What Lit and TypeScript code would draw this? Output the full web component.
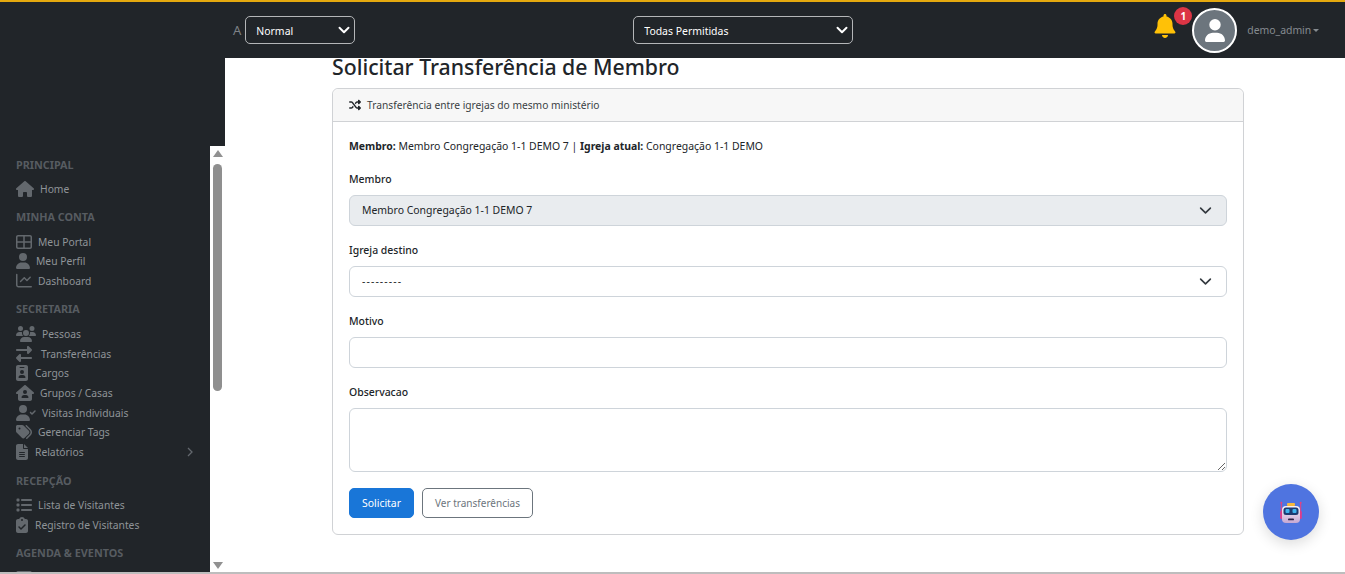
import { LitElement, html, css, svg } from "lit";
import { customElement } from "lit/decorators.js";

const ICONS: Record<string, [number, number, any]> = {
  home: [576, 512, svg`<path d="M575.8 255.5c0 18-15 32.1-32 32.1h-32l.7 160.2c0 2.7-.2 5.4-.5 8.1V472c0 22.1-17.9 40-40 40H456c-1.100 0-2.200 0-3.300-.1-1.400.1-2.800.1-4.200.1H392c-22.100 0-40-17.900-40-40V384c0-17.700-14.300-32-32-32h-64c-17.700 0-32 14.300-32 32v88c0 22.100-17.900 40-40 40h-55.900c-1.500 0-3-.1-4.500-.2-1.200.1-2.400.2-3.600.2H104c-22.100 0-40-17.900-40-40V360c0-.9 0-1.900.1-2.800v-69.600H32c-18 0-32-14-32-32.100 0-9 3-17 10-24L266.400 8c7-7 15-8 22-8s15 2 21 7l255.400 224.500c8 7 12 15 11 24z"/>`],
  grid: [512, 512, svg`<path d="M448 32H64C28.700 32 0 60.700 0 96v320c0 35.300 28.700 64 64 64h384c35.300 0 64-28.700 64-64V96c0-35.300-28.700-64-64-64zM64 80h168v152H48V96c0-8.800 7.200-16 16-16zM48 280h184v152H64c-8.800 0-16-7.200-16-16V280zm232 152V280h184v136c0 8.800-7.200 16-16 16H280zm184-200H280V80h168c8.800 0 16 7.200 16 16v136z"/>`],
  user: [448, 512, svg`<path d="M224 256a128 128 0 1 0 0-256 128 128 0 1 0 0 256zm-45.700 48C79.800 304 0 383.800 0 482.300 0 498.700 13.300 512 29.700 512h388.600c16.400 0 29.700-13.300 29.700-29.700C448 383.800 368.200 304 269.700 304h-91.400z"/>`],
  chart: [512, 512, svg`<path d="M48 48c0-13.300-10.700-24-24-24S0 34.700 0 48v336c0 44.200 35.800 80 80 80h408c13.300 0 24-10.700 24-24s-10.700-24-24-24H80c-17.700 0-32-14.300-32-32V48zm423 103c9.400-9.400 9.400-24.600 0-33.900s-24.600-9.400-33.900 0l-87 87-68-68c-9.400-9.400-24.600-9.400-33.900 0l-120 120c-9.400 9.400-9.400 24.600 0 33.900s24.600 9.400 33.900 0l103-103 68 68c9.400 9.400 24.600 9.400 33.900 0l104-104z"/>`],
  users: [640, 512, svg`<path d="M144 0a80 80 0 1 1 0 160 80 80 0 1 1 0-160zm368 0a80 80 0 1 1 0 160 80 80 0 1 1 0-160zM0 298.700C0 239.800 47.800 192 106.700 192h42.700c15.900 0 31 3.500 44.600 9.700-1.300 7.200-1.900 14.700-1.900 22.300 0 38.200 16.800 72.500 43.300 96H21.300C9.600 320 0 310.400 0 298.700zM405.300 320h-.7c26.600-23.500 43.300-57.800 43.300-96 0-7.600-.7-15-1.900-22.300 13.600-6.300 28.700-9.700 44.600-9.700h42.700c58.900 0 106.700 47.800 106.700 106.700 0 11.800-9.600 21.300-21.300 21.300H405.300zM224 224a96 96 0 1 1 192 0 96 96 0 1 1-192 0zM128 485.300C128 411.700 187.700 352 261.300 352h117.300c73.700 0 133.400 59.700 133.400 133.300 0 14.700-11.900 26.700-26.700 26.700H154.700c-14.700 0-26.700-11.900-26.700-26.700z"/>`],
  swap: [512, 512, svg`<path d="M32 96h320V32c0-12.900 7.800-24.600 19.800-29.600s25.700-2.200 34.900 6.900l96 96c6 6 9.400 14.100 9.400 22.600s-3.400 16.600-9.400 22.600l-96 96c-9.200 9.200-22.900 11.900-34.900 6.900S352 236.900 352 224v-64H32c-17.700 0-32-14.300-32-32s14.300-32 32-32zm448 256c17.700 0 32 14.300 32 32s-14.300 32-32 32H160v64c0 12.900-7.800 24.600-19.800 29.600s-25.700 2.200-34.900-6.900l-96-96c-6-6-9.400-14.100-9.400-22.600s3.400-16.600 9.400-22.600l96-96c9.200-9.200 22.900-11.900 34.900-6.900s19.800 16.600 19.800 29.600v64h320z"/>`],
  badge: [384, 512, svg`<path fill-rule="evenodd" d="M64 0C28.700 0 0 28.700 0 64v384c0 35.300 28.700 64 64 64h256c35.300 0 64-28.700 64-64V64c0-35.300-28.700-64-64-64H64zm64 64h128c8.800 0 16 7.200 16 16s-7.200 16-16 16H128c-8.800 0-16-7.200-16-16s7.200-16 16-16zm64 96a64 64 0 1 1 0 128 64 64 0 1 1 0-128zm-32 160h64c44.200 0 80 35.800 80 80 0 8.800-7.200 16-16 16H96c-8.800 0-16-7.200-16-16 0-44.200 35.800-80 80-80z"/>`],
  houseUser: [576, 512, svg`<path fill-rule="evenodd" d="M575.800 255.500c0 18-15 32.100-32 32.100h-32l.7 160.200c0 35.500-28.500 64.200-64 64.200H128.100c-35.300 0-64-28.700-64-64V287.600H32c-18 0-32-14-32-32.100 0-9 3-17 10-24L266.400 8c7-7 15-8 22-8s15 2 21 7l255.400 224.500c8 7 12 15 11 24zM352 224a64 64 0 1 0-128 0 64 64 0 1 0 128 0zm-96 96c-44.200 0-80 35.800-80 80 0 8.800 7.200 16 16 16h192c8.800 0 16-7.200 16-16 0-44.200-35.800-80-80-80h-64z"/>`],
  userCheck: [640, 512, svg`<path d="M96 128a128 128 0 1 1 256 0 128 128 0 1 1-256 0zM0 482.300C0 383.800 79.800 304 178.300 304h91.400c98.500 0 178.300 79.800 178.300 178.300 0 16.400-13.300 29.700-29.700 29.700H29.700C13.300 512 0 498.700 0 482.300z"/><path d="M625 177c9.400 9.400 9.400 24.600 0 33.900l-96 96c-9.400 9.400-24.600 9.400-33.900 0l-48-48c-9.400-9.400-9.400-24.600 0-33.900s24.600-9.400 33.900 0l31 31 79-79c9.400-9.400 24.600-9.400 34 0z"/>`],
  tags: [512, 512, svg`<path fill-rule="evenodd" d="M345 39.100l127.800 129.300c52.400 53 52.400 138.200 0 191.200L360.800 472.900c-9.300 9.400-24.500 9.500-33.900.2s-9.500-24.500-.2-33.900l111.900-113.300c33.900-34.300 33.900-89.400 0-123.700L310.900 72.900c-9.300-9.400-9.200-24.600.2-33.900s24.600-9.200 33.900.2zM0 229.500V80c0-26.500 21.500-48 48-48h149.500c17 0 33.300 6.700 45.300 18.700l168 168c25 25 25 65.500 0 90.500L277.300 442.700c-25 25-65.500 25-90.500 0l-168-168C6.700 262.700 0 246.500 0 229.500zM144 144a32 32 0 1 0-64 0 32 32 0 1 0 64 0z"/>`],
  file: [384, 512, svg`<path fill-rule="evenodd" d="M64 0C28.700 0 0 28.700 0 64v384c0 35.300 28.700 64 64 64h256c35.300 0 64-28.700 64-64V160H256c-17.700 0-32-14.300-32-32V0H64zm192 0v128h128L256 0zM112 256h160c8.800 0 16 7.200 16 16s-7.200 16-16 16H112c-8.800 0-16-7.200-16-16s7.200-16 16-16zm0 64h160c8.800 0 16 7.200 16 16s-7.200 16-16 16H112c-8.800 0-16-7.200-16-16s7.200-16 16-16zm0 64h160c8.800 0 16 7.200 16 16s-7.200 16-16 16H112c-8.800 0-16-7.200-16-16s7.200-16 16-16z"/>`],
  list: [512, 512, svg`<path d="M40 48C26.700 48 16 58.700 16 72v48c0 13.300 10.700 24 24 24h48c13.300 0 24-10.700 24-24V72c0-13.300-10.700-24-24-24H40zm152 16c-17.700 0-32 14.300-32 32s14.300 32 32 32h288c17.700 0 32-14.300 32-32s-14.300-32-32-32H192zm0 160c-17.700 0-32 14.300-32 32s14.300 32 32 32h288c17.700 0 32-14.300 32-32s-14.300-32-32-32H192zm0 160c-17.700 0-32 14.300-32 32s14.300 32 32 32h288c17.700 0 32-14.300 32-32s-14.300-32-32-32H192zM16 232v48c0 13.300 10.700 24 24 24h48c13.300 0 24-10.700 24-24v-48c0-13.300-10.700-24-24-24H40c-13.300 0-24 10.700-24 24zm24 136c-13.300 0-24 10.700-24 24v48c0 13.300 10.700 24 24 24h48c13.300 0 24-10.700 24-24v-48c0-13.300-10.700-24-24-24H40z"/>`],
  clip: [384, 512, svg`<path fill-rule="evenodd" d="M192 0c-41.800 0-77.400 26.700-90.500 64H64C28.700 64 0 92.700 0 128v320c0 35.300 28.700 64 64 64h256c35.300 0 64-28.700 64-64V128c0-35.300-28.700-64-64-64h-37.500C269.400 26.700 233.800 0 192 0zm0 64a32 32 0 1 1 0 64 32 32 0 1 1 0-64zm113 177c9.400 9.400 9.400 24.600 0 33.900L177 403c-9.400 9.400-24.600 9.400-33.900 0l-64-64c-9.400-9.400-9.400-24.600 0-33.900s24.600-9.400 33.900 0l47 47 111-111c9.400-9.400 24.600-9.400 33.900 0z"/>`],
};

type Item = { icon: string; label: string; arrow?: boolean; extra?: number };
type Section = { title: string; items: Item[] };
const NAV: Section[] = [
  { title: "PRINCIPAL", items: [{ icon: "home", label: "Home" }] },
  { title: "MINHA CONTA", items: [
    { icon: "grid", label: "Meu Portal" },
    { icon: "user", label: "Meu Perfil" },
    { icon: "chart", label: "Dashboard" },
  ] },
  { title: "SECRETARIA", items: [
    { icon: "users", label: "Pessoas" },
    { icon: "swap", label: "Transferências", extra: 3 },
    { icon: "badge", label: "Cargos", extra: 1 },
    { icon: "houseUser", label: "Grupos / Casas" },
    { icon: "userCheck", label: "Visitas Individuais" },
    { icon: "tags", label: "Gerenciar Tags" },
    { icon: "file", label: "Relatórios", arrow: true, extra: 1 },
  ] },
  { title: "RECEPÇÃO", items: [
    { icon: "list", label: "Lista de Visitantes" },
    { icon: "clip", label: "Registro de Visitantes", extra: 1 },
  ] },
  { title: "AGENDA & EVENTOS", items: [{ icon: "grid", label: "" }] },
];

@customElement("app-root")
export class AppRoot extends LitElement {
  static styles = css`
    :host {
      display: flex;
      flex-direction: column;
      height: 574px;
      overflow: hidden;
      background: #fff;
      font-family: "Noto Sans", "Open Sans", sans-serif;
      font-size: 10.450px;
      color: #212529;
      position: relative;
    }
    .top {
      flex: none;
      height: 56px;
      background: #212529;
      border-top: 2px solid #e5a90f;
      display: flex;
      align-items: center;
      padding-left: 233px;
      color: #888;
      position: relative;
      z-index: 1;
    }
    .a { font-size: 13px; margin-right: 4px; color: #7d8186; }
    .tsel {
      appearance: none;
      background: #212529 url("data:image/svg+xml,%3csvg xmlns='http://www.w3.org/2000/svg' viewBox='0 0 16 16'%3e%3cpath fill='none' stroke='%23fff' stroke-linecap='round' stroke-linejoin='round' stroke-width='2.600' d='m2 5 6 6 6-6'/%3e%3c/svg%3e") no-repeat right 4px center / 12px 12px;
      border: 1px solid #b4b6b8;
      border-radius: 5px;
      color: #fff;
      height: 28px;
      font: inherit;
      padding: 2px 10px 0;
      outline: none;
    }
    .t1 { width: 110px; }
    .t2 { width: 220px; margin-left: 278px; }
    .bell { width: 22px; height: 24px; margin-left: 301px; fill: #ffc107; flex: none; margin-top: -9px; }
    .count {
      width: 18px; height: 18px; border-radius: 50%; background: #dc3545; color: #fff;
      font-size: 10px; font-weight: 700; display: grid; place-items: center;
      margin: -29px -1px 0 -2px; flex: none;
    }
    .avatar {
      width: 41px; height: 41px; border-radius: 50%; background: #6c757d;
      border: 2px solid #fff; flex: none; display: grid; place-items: center;
      margin-left: 1px;
    }
    .avatar svg { width: 20px; height: 23px; fill: #fff; }
    .who { margin-left: 10px; color: #858b90; display: flex; align-items: center; gap: 2px; letter-spacing: -.03px; }
    .caret { border: 3px solid transparent; border-top-color: #858b90; border-bottom: 0; }
    .mid { flex: 1; display: flex; min-height: 0; }
    .side { width: 225px; flex: none; display: flex; flex-direction: column; background: #212529; }
    .brand { height: 88px; flex: none; }
    .sbody { flex: 1; display: flex; min-height: 0; }
    .nav { width: 210px; flex: none; padding: 9.700px 16px 0; box-sizing: border-box; overflow: hidden; }
    .sect { margin-bottom: 9.750px; }
    .sect.tight { margin-bottom: 9.200px; }
    .stitle { font-size: 10.800px; font-weight: 700; color: #575c61; height: 18px; line-height: 18px; margin-bottom: 5.550px; }
    .item { height: 19.700px; display: flex; align-items: center; color: #8f9498; font-size: 10.300px; }
    .item svg.ic { height: 16px; fill: #63686d; margin-right: 6px; flex: none; }
    .chev { margin-left: auto; margin-right: 1px; width: 6px; height: 10px; fill: none; stroke: #63686d; stroke-width: 1.300; }
    .track { width: 15px; flex: none; background: #fff; display: flex; flex-direction: column; align-items: center; }
    .arr { width: 0; height: 0; border: 5px solid transparent; flex: none; }
    .up { border-bottom: 7px solid #919191; border-top: 0; margin-top: 4px; }
    .thumb { width: 9px; height: 227px; background: #8f8f8f; border-radius: 5px; margin-top: 7px; flex: none; }
    .down { border-top: 7px solid #919191; border-bottom: 0; margin-top: auto; margin-bottom: 3px; }
    .main { flex: 1; padding: 0 101px 0 107px; min-width: 0; }
    h1 { font-size: 21.250px; font-weight: 500; margin: 0; line-height: 18px; height: 18px; white-space: nowrap; }
    .card { border: 1px solid #d0d2d5; border-radius: 6px; margin-top: 12px; }
    .chead {
      height: 32px; background: #f7f7f7; border-bottom: 1px solid #d0d2d5; border-radius: 6px 6px 0 0;
      display: flex; align-items: center; padding: 0 16px; gap: 6px; color: #3a3f44; font-size: 10.230px;
    }
    .chead svg { width: 12px; height: 12px; fill: #212529; }
    .cbody { padding: 16px; display: flex; flex-direction: column; }
    .info { margin: 0 0 17px; line-height: 16px; }
    .info b { font-weight: 700; }
    .field { display: flex; flex-direction: column; margin-bottom: 16px; }
    label { line-height: 16px; margin-bottom: 8px; font-weight: 500; }
    select.f, input.f, textarea.f {
      box-sizing: border-box; width: 100%; border: 1px solid #ced4da; border-radius: 6px;
      font: inherit; color: #212529; background-color: #fff; padding: 0 12px; height: 31px; outline: none; display: block;
    }
    select.f {
      appearance: none;
      padding-bottom: 2px;
      background-image: url("data:image/svg+xml,%3csvg xmlns='http://www.w3.org/2000/svg' viewBox='0 0 16 16'%3e%3cpath fill='none' stroke='%23343a40' stroke-linecap='round' stroke-linejoin='round' stroke-width='2' d='m2 5 6 6 6-6'/%3e%3c/svg%3e");
      background-repeat: no-repeat; background-position: right 14px center; background-size: 13px 13px;
    }
    select.f:disabled { background-color: #e9ecef; opacity: 1; color: #212529; }
    select.dash { letter-spacing: 1.100px; }
    textarea.f { height: 64px; padding: 4px 12px; resize: vertical; }
    .btns { display: flex; gap: 8px; }
    .btn { height: 30px; box-sizing: border-box; border-radius: 5px; font: inherit; padding: 0; display: grid; place-items: center; white-space: nowrap; }
    .primary { background: #1976d8; border: 1px solid #1976d8; color: #fff; width: 65px; }
    .outline { background: #fff; border: 1px solid #6c757d; color: #6c757d; width: 111px; font-size: 10px; }
    .foot { flex: none; height: 2px; background: #bdbdbd; }
    .fab {
      position: absolute; left: 1263px; top: 484px; width: 56px; height: 56px; border-radius: 50%;
      background: #4f74e0; box-shadow: 0 4px 14px rgba(0,0,0,.14); display: grid; place-items: center;
    }
    .fab svg { width: 24px; height: 24px; margin-top: 2px; }
  `;

  private icon(name: string, extra = 0) {
    const [w, h, body] = ICONS[name];
    return html`<svg class="ic" viewBox="0 0 ${w} ${h}" style="width:${(w / h) * 16}px;margin-right:${6 + extra}px">${body}</svg>`;
  }

  render() {
    return html`
      <div class="top">
        <span class="a">A</span>
        <select class="tsel t1"><option>Normal</option></select>
        <select class="tsel t2"><option>Todas Permitidas</option></select>
        <svg class="bell" viewBox="0 0 448 512"><path d="M224 0c-17.700 0-32 14.300-32 32v19.200C119 66 64 130.600 64 208v25.400c0 45.400-15.500 89.500-43.800 124.900L5.300 377c-5.800 7.200-6.900 17.100-2.900 25.400S14.800 416 24 416h400c9.200 0 17.600-5.300 21.600-13.600s2.900-18.200-2.900-25.400l-14.900-18.600c-28.300-35.500-43.800-79.600-43.800-125V208c0-77.400-55-142-128-156.800V32c0-17.700-14.300-32-32-32zm-64 448c0 35.300 28.700 64 64 64s64-28.700 64-64H160z"/></svg>
        <span class="count">1</span>
        <span class="avatar"><svg viewBox="0 0 448 512"><path d="M224 256a128 128 0 1 0 0-256 128 128 0 1 0 0 256zm-45.700 48C79.800 304 0 383.800 0 482.300 0 498.700 13.300 512 29.700 512h388.600c16.400 0 29.700-13.300 29.700-29.700C448 383.800 368.200 304 269.700 304h-91.400z"/></svg></span>
        <span class="who">demo_admin<i class="caret"></i></span>
      </div>
      <div class="mid">
        <aside class="side">
          <div class="brand"></div>
          <div class="sbody">
            <nav class="nav">
              ${NAV.map((s, n) => html`
                <div class="sect ${n === 0 ? "tight" : ""}">
                  <div class="stitle">${s.title}</div>
                  ${s.items.map(i => html`
                    <div class="item">
                      ${this.icon(i.icon, i.extra ?? 0)}
                      <span>${i.label}</span>
                      ${i.arrow ? html`<svg class="chev" viewBox="0 0 6 10"><path d="M1 1l4 4-4 4"/></svg>` : ""}
                    </div>`)}
                </div>`)}
            </nav>
            <div class="track">
              <i class="arr up"></i>
              <div class="thumb"></div>
              <i class="arr down"></i>
            </div>
          </div>
        </aside>
        <main class="main">
          <h1>Solicitar Transferência de Membro</h1>
          <section class="card">
            <div class="chead">
              <svg viewBox="0 0 512 512"><path d="M403.800 34.400c12-5 25.700-2.200 34.900 6.900l64 64c6 6 9.400 14.100 9.400 22.600s-3.400 16.600-9.400 22.600l-64 64c-9.200 9.200-22.900 11.900-34.900 6.900S384 204.900 384 192v-32h-32c-10.100 0-19.600 4.700-25.600 12.800L284 229.300l-40-53.300 31.200-41.600C293.300 110.200 321.800 96 352 96h32V64c0-12.900 7.800-24.600 19.800-29.600zM164 282.700l40 53.300-31.200 41.600C154.700 401.800 126.200 416 96 416H32c-17.700 0-32-14.300-32-32s14.300-32 32-32h64c10.100 0 19.600-4.700 25.600-12.800l42.400-56.500zm274.600 188c-9.200 9.200-22.900 11.900-34.900 6.900S384 460.900 384 448v-32h-32c-30.200 0-58.700-14.200-76.800-38.400L121.600 172.800c-6-8.100-15.500-12.800-25.600-12.800H32c-17.700 0-32-14.300-32-32s14.300-32 32-32h64c30.200 0 58.700 14.200 76.800 38.400l153.600 204.800c6 8.100 15.500 12.800 25.600 12.800h32v-32c0-12.900 7.800-24.600 19.800-29.600s25.700-2.200 34.900 6.900l64 64c6 6 9.400 14.100 9.400 22.600s-3.400 16.600-9.400 22.600l-64 64z"/></svg>
              Transferência entre igrejas do mesmo ministério
            </div>
            <div class="cbody">
              <p class="info"><b>Membro:</b> Membro Congregação 1-1 DEMO 7 | <b>Igreja atual:</b> Congregação 1-1 DEMO</p>
              <div class="field">
                <label>Membro</label>
                <select class="f" disabled><option>Membro Congregação 1-1 DEMO 7</option></select>
              </div>
              <div class="field">
                <label>Igreja destino</label>
                <select class="f dash"><option>---------</option></select>
              </div>
              <div class="field">
                <label>Motivo</label>
                <input class="f" type="text" />
              </div>
              <div class="field">
                <label>Observacao</label>
                <textarea class="f"></textarea>
              </div>
              <div class="btns">
                <button class="btn primary">Solicitar</button>
                <button class="btn outline">Ver transferências</button>
              </div>
            </div>
          </section>
        </main>
      </div>
      <div class="foot"></div>
      <div class="fab">
        <svg viewBox="0 0 24 24">
          <defs>
            <linearGradient id="rb" x1="0" y1="0" x2="0" y2="1"><stop offset="0" stop-color="#f7f1f7"/><stop offset="1" stop-color="#c7a8d3"/></linearGradient>
          </defs>
          <path d="M2.300 2v11M21.700 2v11" stroke="#e8407f" stroke-width="1"/>
          <circle cx="2.300" cy="1.800" r="1" fill="#e8407f"/><circle cx="21.700" cy="1.800" r="1" fill="#e8407f"/>
          <rect x="1.200" y="10" width="2.600" height="8" rx="1.200" fill="#e03c8a"/>
          <rect x="20.200" y="10" width="2.600" height="8" rx="1.200" fill="#e03c8a"/>
          <rect x="8" y="2" width="8" height="3" rx="1" fill="#f5b83d"/>
          <rect x="3" y="5" width="18" height="17" rx="4" fill="url(#rb)"/>
          <rect x="4.500" y="6.500" width="15" height="7.500" rx="2.500" fill="#1d3a70"/>
          <rect x="6.500" y="8" width="4" height="4" rx="1" fill="#3fb3ee"/>
          <rect x="13.500" y="8" width="4" height="4" rx="1" fill="#3fb3ee"/>
          <rect x="9" y="17.500" width="6" height="1.800" rx=".9" fill="#2f2347"/>
        </svg>
      </div>
    `;
  }
}
